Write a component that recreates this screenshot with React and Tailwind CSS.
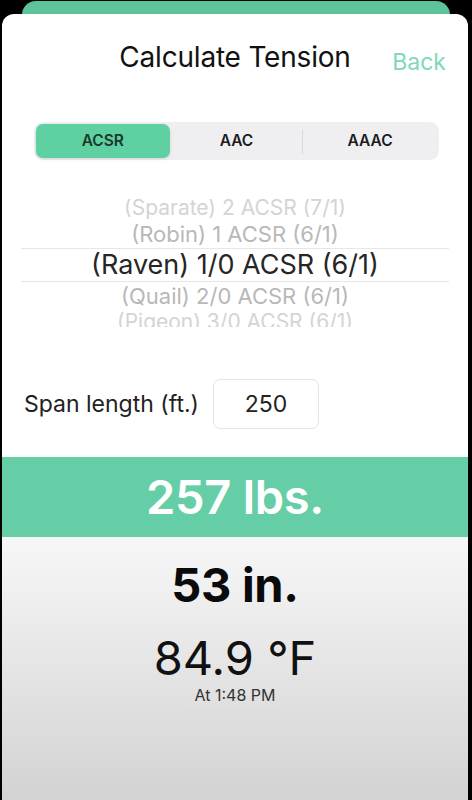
import React, { useState } from 'react';

const TYPES = ['ACSR', 'AAC', 'AAAC'];

const FONT = { fontFamily: 'Inter, "Open Sans", "Liberation Sans", sans-serif' };

function Segmented({ value, onChange }) {
  return (
    <div className="ml-[32px] w-[405px] h-[38px] bg-[#efeff1] rounded-[9px] p-[2px] grid grid-cols-3">
      {TYPES.map((t, i) => (
        <button
          key={t}
          onClick={() => onChange(t)}
          className={`relative h-full rounded-[7px] text-[15.5px] font-semibold ${
            value === t ? 'bg-[#5fd0a2] text-[#173a2a] shadow-[0_1px_3px_rgba(0,0,0,0.12)]' : 'text-[#1c1c1e]'
          }`}
        >
          {t}
          {i === 1 && value === 'ACSR' && (
            <span className="absolute right-0 top-[6px] h-[24px] w-px bg-[#d8d8dc]" />
          )}
        </button>
      ))}
    </div>
  );
}

function Picker() {
  return (
    <div className="mt-[39px] h-[128px] overflow-hidden">
      <div className="-mt-[3px] flex flex-col items-center">
        <div className="h-[24px] flex items-center text-[21px] text-[#d4d4d4]">(Sparate) 2 ACSR (7/1)</div>
        <div className="h-[28px] flex items-center text-[22px] text-[#b8b8b8]">(Robin) 1 ACSR (6/1)</div>
        <div className="w-[428px] h-[34px] flex items-center justify-center border-y border-[#e6e6e6] text-[27px] text-[#262626]">
          (Raven) 1/0 ACSR (6/1)
        </div>
        <div className="h-[28px] flex items-center text-[22px] text-[#b8b8b8]">(Quail) 2/0 ACSR (6/1)</div>
        <div className="h-[24px] flex items-center text-[21px] text-[#d4d4d4]">(Pigeon) 3/0 ACSR (6/1)</div>
      </div>
    </div>
  );
}

export default function App() {
  const [type, setType] = useState('ACSR');
  const [span, setSpan] = useState('250');

  return (
    <div className="w-[472px] h-[800px] bg-black overflow-hidden" style={FONT}>
      <div className="mx-[22px] mt-px h-[24px] rounded-t-[14px] bg-[#5cc39a]" />
      <div className="relative -mt-[11px] ml-[2px] w-[466px] h-[790px] bg-white rounded-t-[12px] overflow-hidden flex flex-col">
        <div className="mt-[21px] h-[44px] grid grid-cols-[1fr_auto_1fr] items-center">
          <div />
          <h1 className="text-[28px] text-[#111] tracking-[-0.2px]">Calculate Tension</h1>
          <div className="flex justify-end pr-[22px] pt-[10px]">
            <button className="text-[23px] text-[#7fd8b6]">Back</button>
          </div>
        </div>

        <div className="mt-[43px]">
          <Segmented value={type} onChange={setType} />
        </div>

        <Picker />

        <div className="mt-[52px] ml-[22px] flex items-center gap-[14px]">
          <span className="text-[23px] text-[#222]">Span length (ft.)</span>
          <input
            value={span}
            onChange={e => setSpan(e.target.value)}
            className="w-[106px] h-[50px] rounded-[7px] border border-[#e4e4e4] text-center text-[23px] text-[#222] outline-none"
          />
        </div>

        <div className="mt-[28px] h-[80px] bg-[#66cea6] flex items-center justify-center">
          <span className="text-[47px] font-semibold text-white tracking-[-0.3px]">257 lbs.</span>
        </div>

        <div className="flex-1 bg-gradient-to-b from-[#f7f7f7] to-[#d2d2d2] flex flex-col items-center">
          <div className="mt-[22px] leading-[52px] text-[47px] font-bold text-[#0a0a0a] tracking-[-0.3px]">53 in.</div>
          <div className="mt-[20px] leading-[54px] text-[47px] text-[#111]">84.9 °F</div>
          <div className="mt-px leading-[18px] text-[16px] text-[#333]">At 1:48 PM</div>
          <div className="mt-[7px] w-[95px] h-px bg-[#dcdcdc]" />
        </div>
      </div>
    </div>
  );
}
